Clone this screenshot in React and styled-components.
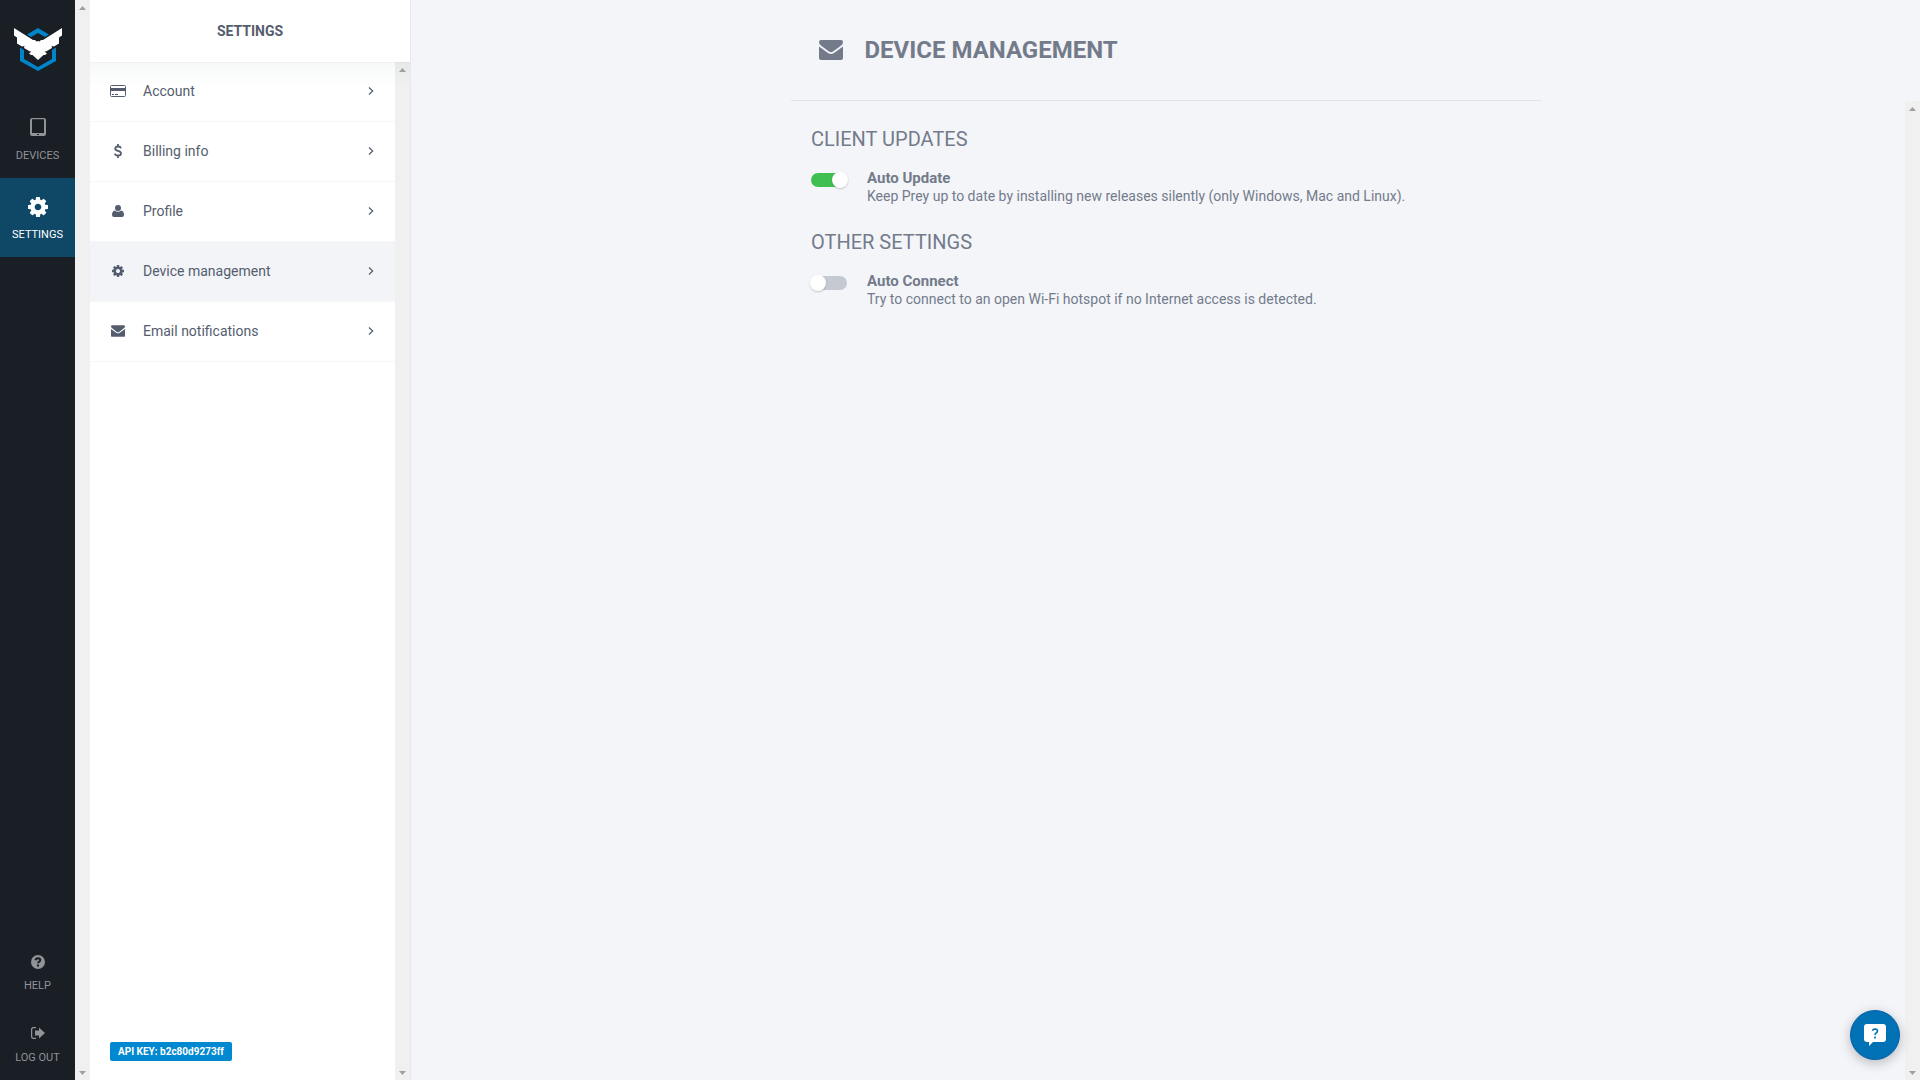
import React from 'react'
import styled, { createGlobalStyle } from 'styled-components'

const GlobalStyle = createGlobalStyle`
  *, *::before, *::after {
    box-sizing: border-box;
  }

  body {
    margin: 0;
    font-family: Roboto, 'Liberation Sans', sans-serif;
    color: #737b8b;
    background-color: #f3f5f9;
  }

  h1, h2, h3, p, ul {
    margin: 0;
    padding: 0;
  }
`

const Page = styled.div`
  display: flex;
  height: 100vh;
  overflow: hidden;
`

const Sidebar = styled.nav`
  display: flex;
  flex-direction: column;
  flex: none;
  width: 75px;
  background-color: #1a1e25;
`

const Logo = styled.a`
  display: flex;
  justify-content: center;
  height: 99px;
  padding-top: 28px;
`

const SideLink = styled.a`
  display: flex;
  flex-direction: column;
  align-items: center;
  justify-content: space-between;
  height: ${props => (props.$small ? '72px' : '79px')};
  padding: 19px 0 15px;
  font-size: 11px;
  line-height: 14px;
  text-transform: uppercase;
  text-decoration: none;
  color: ${props => (props.$active ? '#fff' : '#909398')};
  background-color: ${props => (props.$active ? '#0f4766' : 'transparent')};
`

const SideBottom = styled.div`
  margin-top: auto;
`

const Track = styled.div`
  display: flex;
  flex-direction: column;
  align-items: center;
  justify-content: space-between;
  flex: none;
  width: 15px;
  padding: 6px 0 5px;
  background-color: rgba(0, 0, 0, 0.06);
`

const GutterTrack = styled.div`
  display: flex;
  background-color: #fff;
`

const Arrow = styled.span`
  width: 7px;
  height: 4px;
  background-color: #a0a0a0;
  clip-path: ${props =>
    props.$down ? 'polygon(0 0, 100% 0, 50% 100%)' : 'polygon(50% 0, 100% 100%, 0 100%)'};
`

const Panel = styled.aside`
  display: flex;
  flex-direction: column;
  flex: none;
  width: 321px;
  border-right: 1px solid #e6e8ed;
  background-color: #fff;
`

const PanelTitle = styled.h2`
  flex: none;
  height: 62px;
  font-size: 14px;
  font-weight: 700;
  line-height: 62px;
  text-align: center;
  color: #545d6e;
`

const PanelBody = styled.div`
  display: flex;
  flex: 1;
  min-height: 0;
  box-shadow: inset 0 1px 0 #eff1f2;
  background-image: linear-gradient(#f6f8f8, #fff 24px);
`

const PanelContent = styled.div`
  display: flex;
  flex-direction: column;
  align-items: flex-start;
  justify-content: space-between;
  flex: 1;
  padding-bottom: 19px;
`

const Menu = styled.ul`
  width: 100%;
  list-style: none;
`

const MenuLink = styled.a`
  display: flex;
  align-items: center;
  height: 60px;
  padding: 0 21px 1px 20px;
  border-bottom: 1px solid #f5f6f8;
  font-size: 14px;
  text-decoration: none;
  color: #545d6e;
  background-color: ${props => (props.$active ? '#f3f4f8' : 'transparent')};
`

const MenuIcon = styled.span`
  display: flex;
  justify-content: center;
  width: 16px;
  margin-right: 17px;
`

const MenuText = styled.span`
  flex: 1;
`

const ApiKey = styled.span`
  margin-left: 20px;
  padding: 0 8px;
  border-radius: 2px;
  font-size: 10px;
  font-weight: 700;
  line-height: 19px;
  color: #fff;
  background-color: #0089d0;
`

const Main = styled.main`
  display: flex;
  flex-direction: column;
  flex: 1;
  min-width: 0;
`

const MainHeader = styled.header`
  display: flex;
  align-items: center;
  gap: 22px;
  width: 100%;
  max-width: 750px;
  height: 101px;
  margin: 0 auto;
  padding: 0 28px;
  border-bottom: 1px solid #e1e3ea;
`

const Title = styled.h1`
  font-size: 24px;
  font-weight: 700;
  line-height: 32px;
`

const MainBody = styled.div`
  display: flex;
  flex: 1;
`

const Scrollable = styled.div`
  flex: 1;
`

const Content = styled.div`
  max-width: 694px;
  margin: 0 auto;
  padding-top: 24px;
`

const Section = styled.section`
  margin-bottom: 23px;
`

const SectionTitle = styled.h2`
  margin-bottom: 16px;
  font-size: 20px;
  font-weight: 400;
  line-height: 28px;
  text-transform: uppercase;
`

const Option = styled.label`
  display: flex;
  gap: 20px;
  cursor: pointer;
`

const Switch = styled.input`
  appearance: none;
  flex: none;
  display: flex;
  align-items: center;
  width: 36px;
  height: 14px;
  margin: 4px 0 0;
  border-radius: 7px;
  background-color: #c5c9d1;

  &::before {
    content: '';
    flex: none;
    width: 16px;
    height: 16px;
    margin: 0 -1px;
    border-radius: 50%;
    background-color: #fff;
    box-shadow: 0 1px 2px rgba(0, 0, 0, 0.2);
  }

  &:checked {
    justify-content: flex-end;
    background-color: #3fbf51;
  }
`

const OptionName = styled.h3`
  font-size: 15px;
  font-weight: 700;
  line-height: 18px;
`

const OptionText = styled.p`
  font-size: 14px;
  line-height: 18px;
`

const HelpButton = styled.button`
  position: fixed;
  right: 20px;
  bottom: 20px;
  display: flex;
  align-items: center;
  justify-content: center;
  width: 50px;
  height: 50px;
  padding: 0;
  border: 1px solid #0a5fa8;
  border-radius: 50%;
  background-color: #0071b5;
  box-shadow: 0 3px 12px rgba(0, 0, 0, 0.25);
  cursor: pointer;
`

const cogPath =
  'M1152 896q0-106-75-181t-181-75-181 75-75 181 75 181 181 75 181-75 75-181zm512-109v222q0 12-8 23t-20 13l-185 28q-19 54-39 91 35 50 107 138 10 12 10 25t-9 23q-27 37-99 108t-94 71q-12 0-26-9l-138-108q-44 23-91 38-16 136-29 186-7 28-36 28h-222q-14 0-24.5-8.5t-11.5-21.5l-28-184q-49-16-90-37l-141 107q-10 9-25 9-14 0-25-11-126-114-165-168-7-10-7-23 0-12 8-23 15-21 51-66.5t54-70.5q-27-50-41-99l-183-27q-13-2-21-12.5t-8-23.5v-222q0-12 8-23t19-13l186-28q14-46 39-92-40-57-107-138-10-12-10-24 0-10 9-23 26-36 98.5-107.5t94.5-71.5q13 0 26 10l138 107q44-23 91-38 16-136 29-186 7-28 36-28h222q14 0 24.5 8.5t11.5 21.5l28 184q49 16 90 37l142-107q9-9 24-9 13 0 25 10 129 119 165 170 7 8 7 22 0 12-8 23-15 21-51 66.5t-54 70.5q26 50 41 98l183 28q13 2 21 12.5t8 23.5z'

const LogoIcon = () => (
  <svg width="48" height="43" viewBox="0 0 48 43">
    <path fill="#0085ca" d="M24 0l11 6.500-4 2.500-7-4-7 4-4-2.500zM6 19.500l4 2.500v9l14 8 14-8v-9l4-2.500V33L24 43 6 33z" />
    <path
      fill="#fff"
      d="M0 0l19 12h2l1.500 1.500L24 13l1.500.5L27 12h2L48 0v7.500L45 9.500v6l-5 3-2.500-.5L38 20l-6 3.500h-1.500l2.500 2-2 1.500h-1.500L24 32l-5.500-5H17l-2-1.500 2.500-2H16L10 20l.5-2-2.500.5-5-3v-6L0 7.500z"
    />
  </svg>
)

const TabletIcon = () => (
  <svg width="16" height="18" viewBox="0 0 16 18">
    <path
      fill="currentColor"
      fillRule="evenodd"
      d="M2 0h12q2 0 2 2v14q0 2-2 2H2q-2 0-2-2V2q0-2 2-2zM2 1.300v13.700h12V1.300zM7 16v1h2v-1z"
    />
  </svg>
)

const CogIcon = ({ size }) => (
  <svg width={size} height={size} viewBox="128 128 1536 1536">
    <path fill="currentColor" d={cogPath} />
  </svg>
)

const QuestionIcon = () => (
  <svg width="14" height="14" viewBox="0 0 14 14">
    <circle cx="7" cy="7" r="7" fill="currentColor" />
    <path
      fill="none"
      stroke="#1a1e25"
      strokeWidth="2"
      d="M4.500 5.200q.4-2 2.500-2 2.300.1 2.300 1.900 0 1-1.300 1.700-.9.500-.9 1.500M7 9.500v2"
    />
  </svg>
)

const LogoutIcon = () => (
  <svg width="14" height="12" viewBox="0 0 14 12">
    <path fill="none" stroke="currentColor" strokeWidth="1.300" d="M5 .6H2.600q-2 0-2 2v6.800q0 2 2 2H5" />
    <path fill="currentColor" d="M4 3.500h4V.5L14 6l-6 5.500v-3H4z" />
  </svg>
)

const CardIcon = () => (
  <svg width="16" height="12" viewBox="0 0 16 12">
    <rect x=".5" y=".5" width="15" height="11" rx="1" fill="none" stroke="currentColor" />
    <path fill="currentColor" d="M0 3h16v3H0zM2 9h2v1H2zM5 9h3v1H5z" />
  </svg>
)

const DollarIcon = () => (
  <svg width="8" height="14" viewBox="0 0 8 14">
    <path
      fill="none"
      stroke="currentColor"
      strokeWidth="1.800"
      d="M7 4.200Q6.500 2.500 4 2.500 1.200 2.500 1.200 4.600 1.200 6.200 4 6.900 7 7.600 7 9.400 7 11.500 4 11.500 1.300 11.500.9 9.600M4 0v2.500M4 11.500V14"
    />
  </svg>
)

const UserIcon = () => (
  <svg width="12" height="12" viewBox="0 0 12 12">
    <circle cx="6" cy="3" r="3" fill="currentColor" />
    <path fill="currentColor" d="M2.800 5.500Q6 8 9.200 5.500 12 6 12 10q0 2-2 2H2q-2 0-2-2 0-4 2.800-4.500z" />
  </svg>
)

const MailIcon = ({ width, height }) => (
  <svg width={width} height={height} viewBox="0 0 24 20">
    <path
      fill="currentColor"
      d="M2 0h20q2 0 2 2.200 0 2-2.500 3.700L14 11.600q-2 1.300-4 0L2.500 5.900Q0 4.200 0 2.200 0 0 2 0zM0 6.500l9 6.500q3 2 6 0l9-6.500V18q0 2-2 2H2q-2 0-2-2z"
    />
  </svg>
)

const ChevronIcon = () => (
  <svg width="6" height="8" viewBox="0 0 6 8">
    <path fill="none" stroke="currentColor" strokeWidth="1.200" d="M1 .5L4.700 4 1 7.500" />
  </svg>
)

const ChatIcon = () => (
  <svg width="22" height="22" viewBox="0 0 22 22">
    <path fill="#fff" d="M3 0h16q3 0 3 3v12q0 3-3 3H9l-4 4v-4H3q-3 0-3-3V3q0-3 3-3z" />
    <path
      fill="none"
      stroke="#0071b5"
      strokeWidth="1.700"
      d="M8.500 6.800Q8.900 5 11 5q2.500.1 2.500 2 0 1.100-1.300 1.900-1.200.8-1.200 2.200M11 12.500v2"
    />
  </svg>
)

const Scrollbar = () => (
  <Track aria-hidden="true">
    <Arrow />
    <Arrow $down />
  </Track>
)

const menu = [
  { text: 'Account', icon: <CardIcon /> },
  { text: 'Billing info', icon: <DollarIcon /> },
  { text: 'Profile', icon: <UserIcon /> },
  { text: 'Device management', icon: <CogIcon size={12} />, active: true },
  { text: 'Email notifications', icon: <MailIcon width={14} height={12} /> },
]

const sections = [
  {
    title: 'Client updates',
    name: 'Auto Update',
    text: 'Keep Prey up to date by installing new releases silently (only Windows, Mac and Linux).',
    on: true,
  },
  {
    title: 'Other settings',
    name: 'Auto Connect',
    text: 'Try to connect to an open Wi-Fi hotspot if no Internet access is detected.',
    on: false,
  },
]

export default function App() {
  return (
    <Page>
      <GlobalStyle />
      <Sidebar>
        <Logo href="#" aria-label="Prey">
          <LogoIcon />
        </Logo>
        <SideLink href="#devices">
          <TabletIcon />
          Devices
        </SideLink>
        <SideLink href="#settings" $active>
          <CogIcon size={20} />
          Settings
        </SideLink>
        <SideBottom>
          <SideLink href="#help" $small>
            <QuestionIcon />
            Help
          </SideLink>
          <SideLink href="#logout" $small>
            <LogoutIcon />
            Log out
          </SideLink>
        </SideBottom>
      </Sidebar>
      <GutterTrack>
        <Scrollbar />
      </GutterTrack>
      <Panel>
        <PanelTitle>SETTINGS</PanelTitle>
        <PanelBody>
          <PanelContent>
            <Menu>
              {menu.map(item => (
                <li key={item.text}>
                  <MenuLink href="#" $active={item.active}>
                    <MenuIcon>{item.icon}</MenuIcon>
                    <MenuText>{item.text}</MenuText>
                    <ChevronIcon />
                  </MenuLink>
                </li>
              ))}
            </Menu>
            <ApiKey>API KEY: b2c80d9273ff</ApiKey>
          </PanelContent>
          <Scrollbar />
        </PanelBody>
      </Panel>
      <Main>
        <MainHeader>
          <MailIcon width={24} height={20} />
          <Title>DEVICE MANAGEMENT</Title>
        </MainHeader>
        <MainBody>
          <Scrollable>
            <Content>
              {sections.map(section => (
                <Section key={section.title}>
                  <SectionTitle>{section.title}</SectionTitle>
                  <Option>
                    <Switch type="checkbox" role="switch" defaultChecked={section.on} />
                    <div>
                      <OptionName>{section.name}</OptionName>
                      <OptionText>{section.text}</OptionText>
                    </div>
                  </Option>
                </Section>
              ))}
            </Content>
          </Scrollable>
          <GutterTrack>
            <Scrollbar />
          </GutterTrack>
        </MainBody>
      </Main>
      <HelpButton aria-label="Open chat">
        <ChatIcon />
      </HelpButton>
    </Page>
  )
}
